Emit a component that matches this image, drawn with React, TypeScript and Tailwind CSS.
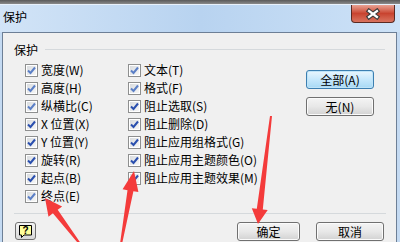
import React from "react";

const FONT = { fontFamily: '"Noto Sans CJK SC", "Noto Sans", sans-serif' };

function Check({ light }: { light?: boolean }) {
  return (
    <div className="w-[13px] h-[13px] shrink-0 border border-[#8e8f8f] bg-white p-[1px]">
      <div className="w-full h-full bg-gradient-to-br from-[#d9dcdf] to-[#f6f6f6] flex items-center justify-center">
        <svg width="9" height="9" viewBox="0 0 9 9">
          <path
            d="M1 4.5 L3.5 7 L8 1.5"
            fill="none"
            stroke={light ? "#5b7fc6" : "#2a4fae"}
            strokeWidth="2"
          />
        </svg>
      </div>
    </div>
  );
}

function Row({ label, light }: { label: string; light?: boolean }) {
  return (
    <div className="h-[18px] flex items-center gap-[3px] text-[12px] leading-none text-black whitespace-nowrap">
      <Check light={light} />
      <span>{label}</span>
    </div>
  );
}

function Btn({ label, w, def }: { label: string; w: string; def?: boolean }) {
  return (
    <div
      className={
        "h-[19px] rounded-[3px] border flex items-center justify-center text-[12px] leading-none text-black " +
        w +
        (def
          ? " border-[#3c7fb1] bg-gradient-to-b from-[#eaf6fd] via-[#c6e8fc] to-[#a7d9f5] shadow-[inset_0_0_0_1px_#bfe4f8]"
          : " border-[#707070] bg-gradient-to-b from-[#f4f4f4] via-[#e8e8e8] to-[#d2d2d2] shadow-[inset_0_0_0_1px_#fbfbfb]")
      }
    >
      {label}
    </div>
  );
}

function arrow(x1: number, y1: number, x2: number, y2: number, hl: number, hw: number, tw: number, sw: number) {
  const dx = x2 - x1;
  const dy = y2 - y1;
  const L = Math.sqrt(dx * dx + dy * dy);
  const ux = dx / L;
  const uy = dy / L;
  const px = -uy;
  const py = ux;
  const bx = x2 - ux * hl;
  const by = y2 - uy * hl;
  const pts = [
    [x1 + (px * tw) / 2, y1 + (py * tw) / 2],
    [bx + (px * sw) / 2, by + (py * sw) / 2],
    [bx + (px * hw) / 2, by + (py * hw) / 2],
    [x2, y2],
    [bx - (px * hw) / 2, by - (py * hw) / 2],
    [bx - (px * sw) / 2, by - (py * sw) / 2],
    [x1 - (px * tw) / 2, y1 - (py * tw) / 2],
  ];
  return pts.map((p) => p[0].toFixed(1) + "," + p[1].toFixed(1)).join(" ");
}

export default function App() {
  const col1: [string, boolean?][] = [
    ["宽度(W)", true],
    ["高度(H)", true],
    ["纵横比(C)", true],
    ["X 位置(X)"],
    ["Y 位置(Y)"],
    ["旋转(R)"],
    ["起点(B)"],
    ["终点(E)", true],
  ];
  const col2: [string, boolean?][] = [
    ["文本(T)", true],
    ["格式(F)", true],
    ["阻止选取(S)"],
    ["阻止删除(D)"],
    ["阻止应用组格式(G)"],
    ["阻止应用主题颜色(O)"],
    ["阻止应用主题效果(M)"],
  ];
  return (
    <div className="relative w-[400px] h-[242px] overflow-hidden bg-[#c4daf2] flex flex-col" style={FONT}>
      <div className="h-[4px] bg-gradient-to-b from-[#5a5a5a] to-[#8a8a8a]" />
      <div className="h-[28px] flex items-start bg-gradient-to-r from-[#d2e4f7] via-[#b8d3f0] to-[#cde2f7] border-t border-[#e8f1fb]">
        <div className="pl-[3px] pt-[6px] text-[12px] leading-none text-black">保护</div>
        <div className="ml-auto mr-[5px] w-[44px] h-[18px] rounded-b-[4px] border border-t-0 border-[#5a2a22] bg-gradient-to-b from-[#e8a193] via-[#c8432f] to-[#d9735f] flex items-center justify-center">
          <svg width="16" height="12" viewBox="0 0 16 12">
            <path d="M4 3 L12 9 M12 3 L4 9" stroke="#3b3b3b" strokeWidth="4.5" strokeLinecap="square" />
            <path d="M4 3 L12 9 M12 3 L4 9" stroke="#ffffff" strokeWidth="2.2" strokeLinecap="square" />
          </svg>
        </div>
      </div>
      <div className="flex-1 ml-[2px] mr-[3px] border-l border-t border-r border-[#6d7f96] bg-[#f0f0f0] flex flex-col relative">
        <div className="mt-[10px] h-[13px] flex items-center">
          <div className="pl-[11px] text-[12px] leading-none text-black">保护</div>
          <div className="flex-1 ml-[7px] mr-[11px] h-px bg-[#d5d9dc]" />
        </div>
        <div className="mt-[5px] flex relative">
          <div className="pl-[22px] w-[125px] flex flex-col">
            {col1.map(([l, li]) => (
              <Row key={l} label={l} light={li} />
            ))}
          </div>
          <div className="w-[178px] flex flex-col">
            {col2.map(([l, li]) => (
              <Row key={l} label={l} light={li} />
            ))}
          </div>
          <div className="pt-[9px] flex flex-col gap-[8px]">
            <Btn label="全部(A)" w="w-[68px]" def />
            <Btn label="无(N)" w="w-[68px]" />
          </div>
        </div>
        <div className="mt-[8px] ml-[11px] mr-[10px] h-px bg-[#d5d9dc]" />
        <div className="mt-[8px] flex items-start pr-[12px]">
          <div className="ml-[12px] w-[21px] h-[18px] rounded-[3px] border border-[#707070] bg-gradient-to-b from-[#f4f4f4] to-[#d8d8d8] flex items-center justify-center">
            <svg width="15" height="15" viewBox="0 0 15 15">
              <path d="M1.5 1.5 H13.5 V11 H6 L3.5 13.5 V11 H1.5 Z" fill="#ffff9a" stroke="#000" strokeWidth="1" />
              <text x="7.5" y="9.5" textAnchor="middle" fontSize="10" fontWeight="bold" fill="#000" fontFamily="Liberation Sans, sans-serif">?</text>
            </svg>
          </div>
          <div className="ml-auto flex gap-[16px]">
            <Btn label="确定" w="w-[63px]" />
            <Btn label="取消" w="w-[68px]" />
          </div>
        </div>
      </div>
      <svg className="absolute left-0 top-0 pointer-events-none" width="400" height="242" viewBox="0 0 400 242">
        <polygon points={arrow(80, 244, 45, 198, 17, 17, 2, 6)} fill="#f43b3b" />
        <polygon points={arrow(121, 244, 134, 171, 20, 16, 2, 6)} fill="#f43b3b" />
        <polygon points={arrow(271, 116, 258, 224, 15, 16, 2, 6)} fill="#f43b3b" />
      </svg>
    </div>
  );
}
